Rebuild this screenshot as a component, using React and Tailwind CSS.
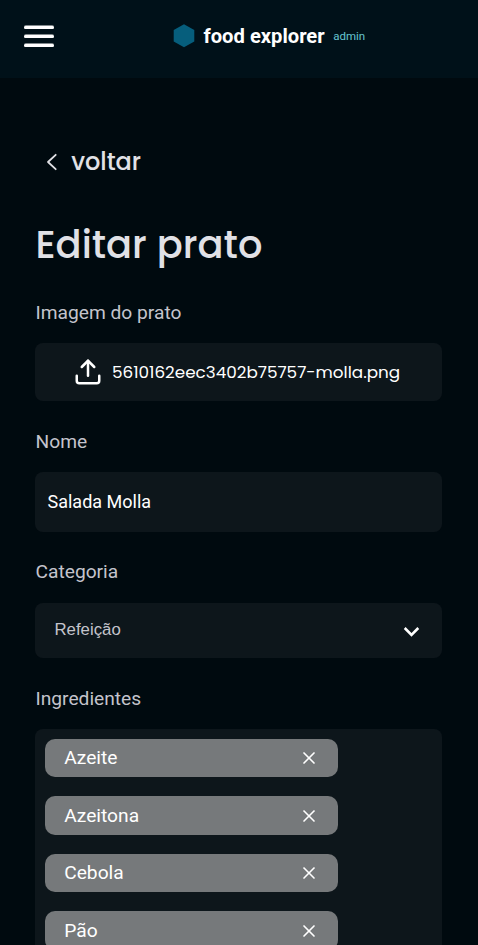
import { FiUpload, FiX } from "react-icons/fi";

const ingredients = ["Azeite", "Azeitona", "Cebola", "Pão"];

const poppins = "font-['Poppins',Inter,sans-serif]";

function MenuBar() {
  return (
    <span className="h-1 w-full rounded-sm bg-white/50 py-[0.5px]">
      <span className="block h-[3px] rounded-sm bg-white" />
    </span>
  );
}

function Header() {
  return (
    <header className="flex h-[78px] shrink-0 items-start bg-[#001119]">
      <button aria-label="Menu" className="mt-[25px] ml-6 flex h-[22px] w-[30px] flex-col justify-between">
        <MenuBar />
        <MenuBar />
        <MenuBar />
      </button>
      <div className="mt-6 ml-[119px] flex h-6 items-center">
        <svg width="22" height="24" viewBox="0 0 22 24" fill="#065e7c">
          <path d="M11 0.3 21.3 6v11.6L11 23.3 0.7 17.6V6z" />
        </svg>
        <span className="ml-[8.5px] text-[20.2px] leading-6 font-bold whitespace-nowrap text-white">food explorer</span>
        <span className="ml-[8.5px] text-[11.5px] leading-6 text-[#82f3ff]/80">admin</span>
      </div>
    </header>
  );
}

function Label({ children }) {
  return <span className="block h-6 pl-[0.5px] text-[19.2px] leading-6 text-[#c4c4cc]">{children}</span>;
}

export default function App() {
  return (
    <div className="flex h-[945px] w-[478px] flex-col overflow-hidden bg-[#000a0f] font-[Roboto,sans-serif]">
      <Header />
      <main className="flex flex-col pr-9 pl-[35px]">
        <a className={`${poppins} mt-[66px] flex h-9 items-center pl-[11px] text-[24px] leading-9 font-medium text-[#e1e1e6]`}>
          <svg width="12" height="18" viewBox="0 0 12 18" fill="none" stroke="currentColor" strokeWidth="1.8" strokeLinecap="round" strokeLinejoin="round">
            <path d="M9.7 1.8 2 9l7.7 7.2" />
          </svg>
          <span className="ml-[13.2px]">voltar</span>
        </a>
        <h1 className={`${poppins} mt-[38px] h-[54px] pl-[0.5px] text-[38.4px] leading-[54px] font-medium text-[#e1e1e6]`}>Editar prato</h1>

        <div className="mt-[29px]">
          <Label>Imagem do prato</Label>
          <div className="mt-[18px] flex h-[58px] items-center rounded-lg bg-[#0d161b] pl-[38.4px] text-white">
            <FiUpload size={30} />
            <span className={`${poppins} ml-[8.6px] pt-0.5 text-[16.8px] whitespace-nowrap`}>5610162eec3402b75757-molla.png</span>
          </div>
        </div>

        <div className="mt-[29px]">
          <Label>Nome</Label>
          <div className="mt-[18px] flex h-[60px] items-center rounded-lg bg-[#0d161b] pb-0.5 pl-[12.5px] text-[18px] text-white">
            Salada Molla
          </div>
        </div>

        <div className="mt-7">
          <Label>Categoria</Label>
          <div className="mt-[19px] flex h-[55px] items-center justify-between rounded-lg bg-[#0d161b] pr-[22px] pl-[19.5px]">
            <span className="pb-px font-['Liberation_Sans',sans-serif] text-[16.8px] text-[#c4c4cc]">Refeição</span>
            <svg className="mt-0.5" width="17" height="12" viewBox="0 0 17 12" fill="none" stroke="#fff" strokeWidth="2.6">
              <path d="M1.7 2 8.5 8.8l6.8-6.8" />
            </svg>
          </div>
        </div>

        <div className="mt-[29px]">
          <Label>Ingredientes</Label>
          <div className="mt-[18px] flex h-[300px] flex-col gap-[19.35px] rounded-lg bg-[#0d161b] px-2.5 pt-[9.9px]">
            {ingredients.map((name) => (
              <div key={name} className="flex h-[38.2px] w-[293px] shrink-0 items-center justify-between rounded-[10px] bg-[#76797b] pr-[19px] pl-[19.2px] text-[19.2px] text-white">
                <span className="pt-[1.5px]">{name}</span>
                <FiX size={20} />
              </div>
            ))}
          </div>
        </div>
      </main>
    </div>
  );
}
